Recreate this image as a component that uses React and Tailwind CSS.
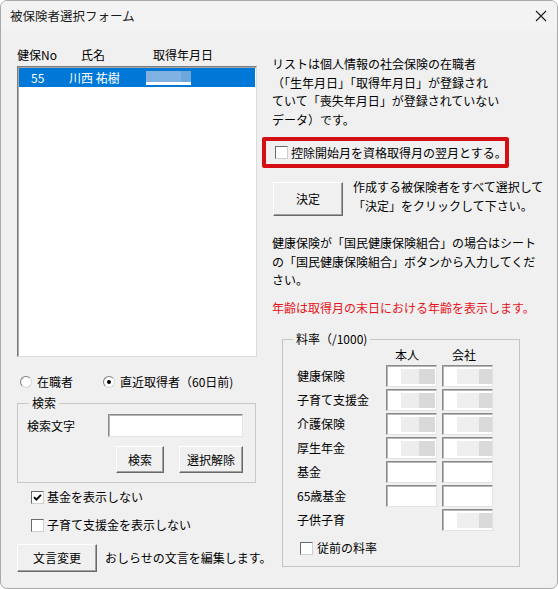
import React from "react";

const FONT = "font-['Noto_Sans_CJK_JP','Noto_Sans',sans-serif]";

function CheckBox({ checked = false }) {
  return (
    <span className="relative block w-[13px] h-[13px] shrink-0 bg-white border border-t-[#6b6b6b] border-l-[#6b6b6b] border-r-[#cfcfcf] border-b-[#cfcfcf]">
      {checked && (
        <svg viewBox="0 0 11 11" className="absolute left-0 top-0 w-[11px] h-[11px]">
          <path d="M2 5.2 L4.4 7.6 L9 2.8" fill="none" stroke="#000" strokeWidth="1.9" />
        </svg>
      )}
    </span>
  );
}

function Radio({ checked = false }) {
  return (
    <span className="relative flex items-center justify-center w-[12px] h-[12px] shrink-0 rounded-full bg-white border border-t-[#7c7c7c] border-l-[#7c7c7c] border-r-[#d6d6d6] border-b-[#d6d6d6]">
      {checked && <span className="block w-[4px] h-[4px] rounded-full bg-black" />}
    </span>
  );
}

function Button({ children, className = "" }) {
  return (
    <div
      className={
        "flex items-center justify-center bg-[#f0f0f0] border border-t-white border-l-white border-r-[#696969] border-b-[#696969] shadow-[inset_-1px_-1px_0_#a0a0a0] " +
        className
      }
    >
      {children}
    </div>
  );
}

// sunken text field used by the rate table; the smeared value sits at the right side
function RateBox({ kind, filled = true }) {
  return (
    <div className="relative w-[51px] h-[22px] bg-white border border-t-[#8a8a8a] border-l-[#8a8a8a] border-r-[#e4e4e4] border-b-[#e4e4e4] shadow-[inset_1px_1px_0_#b5b5b5]">
      {filled && kind === "self" && (
        <>
          <span className="absolute top-[3px] left-[14px] w-[19px] h-[15px] bg-[#ededed]" />
          <span className="absolute top-[3px] left-[32px] w-[16px] h-[15px] bg-[#d9d9d9]" />
        </>
      )}
      {filled && kind === "co" && (
        <>
          <span className="absolute top-[3px] left-[14px] w-[23px] h-[15px] bg-[#efefef]" />
          <span className="absolute top-[3px] left-[36px] w-[13px] h-[15px] bg-[#dadada]" />
        </>
      )}
    </div>
  );
}

const rates = [
  { label: "健康保険", self: true, co: true },
  { label: "子育て支援金", self: true, co: true },
  { label: "介護保険", self: true, co: true },
  { label: "厚生年金", self: true, co: true },
  { label: "基金", self: false, co: false },
  { label: "65歳基金", self: false, co: false },
];

export default function App() {
  return (
    <div
      className={
        "w-[558px] h-[589px] overflow-hidden rounded-[7px] border border-[#a9a9a9] bg-[#f0f0f0] text-[12px] text-black flex flex-col " +
        FONT
      }
    >
      {/* title bar */}
      <div className="h-[30px] shrink-0 bg-[#f3f3f3] flex items-center justify-between pl-[9px] pr-[10px]">
        <span className="leading-[16px] text-[12.5px] text-[#1a1a1a]">被保険者選択フォーム</span>
        <svg viewBox="0 0 12 12" className="w-[12px] h-[12px]">
          <path d="M1 1 L11 11 M11 1 L1 11" stroke="#1a1a1a" strokeWidth="1.1" />
        </svg>
      </div>

      <div className="flex flex-1">
        {/* left column */}
        <div className="ml-[16px] w-[240px] flex flex-col pt-[16px]">
          <div className="flex h-[16px] leading-[16px]">
            <span className="w-[64px]">健保No</span>
            <span className="w-[72px]">氏名</span>
            <span>取得年月日</span>
          </div>

          <div className="mt-[3px] h-[291px] bg-white border border-t-[#7d7d7d] border-l-[#7d7d7d] border-r-[#dcdcdc] border-b-[#dcdcdc] shadow-[inset_1px_1px_0_#a8a8a8]">
            <div className="mt-[1px] ml-[1px] mr-[1px] h-[19px] bg-[#0078d7] text-white flex items-center leading-[16px]">
              <span className="ml-[12px] w-[38px]">55</span>
              <span className="w-[77px]">川西 祐樹</span>
              <span className="relative block w-[45px] h-[14px]">
                <span className="absolute left-0 top-0 w-[35px] h-[11px] bg-[#7fb2e3]" />
                <span className="absolute left-[35px] top-0 w-[10px] h-[11px] bg-[#6ea7de]" />
                <span className="absolute left-0 top-[11px] w-[45px] h-[3px] bg-white" />
              </span>
            </div>
          </div>

          <div className="mt-[17px] h-[16px] flex items-center leading-[16px]">
            <span className="ml-[3px]"><Radio /></span>
            <span className="ml-[5px]">在職者</span>
            <span className="ml-[30px]"><Radio checked /></span>
            <span className="ml-[5px]">直近取得者（60日前)</span>
          </div>

          {/* search group */}
          <div className="relative mt-[13px] w-[239px] h-[80px] border border-[#c8c8c8] pl-[9px] pr-[12px] pt-[10px]">
            <span className="absolute left-[11px] top-[-9px] px-[3px] bg-[#f0f0f0] leading-[16px]">検索</span>
            <div className="flex items-center h-[23px]">
              <span className="w-[81px] leading-[16px]">検索文字</span>
              <div className="flex-1 h-[23px] bg-white border border-t-[#8a8a8a] border-l-[#8a8a8a] border-r-[#e4e4e4] border-b-[#e4e4e4] shadow-[inset_1px_1px_0_#b5b5b5]" />
            </div>
            <div className="mt-[9px] flex justify-end gap-[15px]">
              <Button className="w-[48px] h-[27px]">検索</Button>
              <Button className="w-[64px] h-[27px]">選択解除</Button>
            </div>
          </div>

          <div className="mt-[6px] h-[16px] flex items-center leading-[16px] pl-[14px]">
            <CheckBox checked />
            <span className="ml-[3px]">基金を表示しない</span>
          </div>
          <div className="mt-[12px] h-[16px] flex items-center leading-[16px] pl-[14px]">
            <CheckBox />
            <span className="ml-[3px]">子育て支援金を表示しない</span>
          </div>

          <div className="mt-[11px] flex items-center">
            <Button className="w-[80px] h-[28px] shrink-0">文言変更</Button>
            <span className="ml-[8px] whitespace-nowrap leading-[16px]">おしらせの文言を編集します。</span>
          </div>
        </div>

        {/* right column */}
        <div className="ml-[5px] flex-1 flex flex-col pt-[24px]">
          <p className="pl-[10px] leading-[18.5px] whitespace-nowrap">
            リストは個人情報の社会保険の在職者
            <br />
            （「生年月日」「取得年月日」が登録され
            <br />
            ていて「喪失年月日」が登録されていない
            <br />
            データ）です。
          </p>

          <div className="mt-[8px] w-[247px] h-[31px] border-4 border-[#d40f14] rounded-[2px] flex items-center pl-[9px]">
            <CheckBox />
            <span className="ml-[3px] leading-[16px] whitespace-nowrap">控除開始月を資格取得月の翌月とする。</span>
          </div>

          <div className="mt-[14px] flex items-start">
            <Button className="ml-[11px] w-[70px] h-[34px] shrink-0">決定</Button>
            <p className="ml-[10px] mt-[-4px] leading-[18.5px] whitespace-nowrap">
              作成する被保険者をすべて選択して
              <br />
              「決定」をクリックして下さい。
            </p>
          </div>

          <p className="mt-[18px] pl-[10px] leading-[18.5px] whitespace-nowrap">
            健康保険が「国民健康保険組合」の場合はシート
            <br />
            の「国民健康保険組合」ボタンから入力してくだ
            <br />
            さい。
          </p>

          <p className="mt-[9px] pl-[10px] leading-[18.5px] text-[#e5141b] whitespace-nowrap">
            年齢は取得月の末日における年齢を表示します。
          </p>

          {/* rate group */}
          <div className="relative mt-[22px] ml-[20px] w-[238px] h-[228px] border border-[#c4c4c4] pt-[7px] pl-[14px]">
            <span className="absolute left-[10px] top-[-9px] px-[3px] bg-[#f0f0f0] leading-[16px]">料率（/1000)</span>
            <div className="flex h-[16px] leading-[16px]">
              <span className="w-[90px]" />
              <span className="w-[56px] pl-[8px]">本人</span>
              <span className="pl-[9px]">会社</span>
            </div>
            <div className="mt-[2px] flex flex-col gap-[2px]">
              {rates.map((r) => (
                <div key={r.label} className="flex items-center h-[22px]">
                  <span className="w-[89px] leading-[16px] whitespace-nowrap">{r.label}</span>
                  <RateBox kind="self" filled={r.self} />
                  <span className="w-[5px]" />
                  <RateBox kind="co" filled={r.co} />
                </div>
              ))}
              <div className="flex items-center h-[22px]">
                <span className="w-[145px] leading-[16px]">子供子育</span>
                <RateBox kind="co" />
              </div>
            </div>
            <div className="mt-[9px] ml-[3px] h-[16px] flex items-center leading-[16px]">
              <CheckBox />
              <span className="ml-[4px]">従前の料率</span>
            </div>
          </div>
        </div>
      </div>
    </div>
  );
}
